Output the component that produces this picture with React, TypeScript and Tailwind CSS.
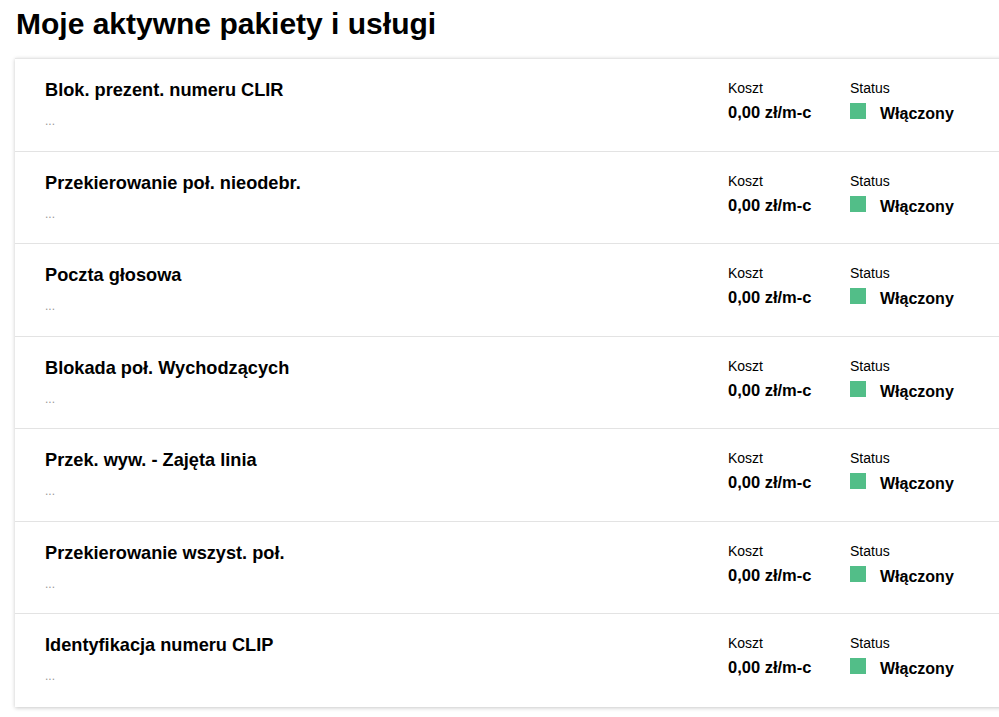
import React from "react";

const rows = [
  "Blok. prezent. numeru CLIR",
  "Przekierowanie poł. nieodebr.",
  "Poczta głosowa",
  "Blokada poł. Wychodzących",
  "Przek. wyw. - Zajęta linia",
  "Przekierowanie wszyst. poł.",
  "Identyfikacja numeru CLIP",
];

export default function App() {
  return (
    <div
      className="w-[999px] h-[717px] overflow-hidden bg-white text-black"
      style={{ fontFamily: '"Liberation Sans", Arial, sans-serif' }}
    >
      <h1 className="pt-[6px] pl-[16px] text-[30px] leading-[36px] font-bold">
        Moje aktywne pakiety i usługi
      </h1>
      <div className="mt-[16px] ml-[15px] w-[1000px] bg-white shadow-[0_1px_4px_rgba(0,0,0,0.22)] border-t border-[#e6e6e6]">
        {rows.map((title, i) => (
          <div
            key={i}
            className={`flex h-[92.5px] pl-[30px] ${i < rows.length - 1 ? "border-b border-[#e3e3e3]" : ""}`}
          >
            <div className="flex-1 pt-[20px]">
              <div className="text-[18.2px] leading-[22px] font-bold">{title}</div>
              <div className="mt-[13px] text-[12px] leading-[14px] text-[#999]">...</div>
            </div>
            <div className="w-[122px] pt-[21px]">
              <div className="text-[14px] leading-[17px]">Koszt</div>
              <div className="mt-[6px] text-[16.5px] leading-[18px] font-bold">0,00 zł/m-c</div>
            </div>
            <div className="w-[165px] pt-[21px]">
              <div className="text-[14px] leading-[17px]">Status</div>
              <div className="mt-[6px] flex items-start">
                <div className="w-[16px] h-[16px] bg-[#52be88]" />
                <div className="ml-[14px] mt-[1px] text-[16px] leading-[19px] font-bold">Włączony</div>
              </div>
            </div>
          </div>
        ))}
      </div>
    </div>
  );
}
